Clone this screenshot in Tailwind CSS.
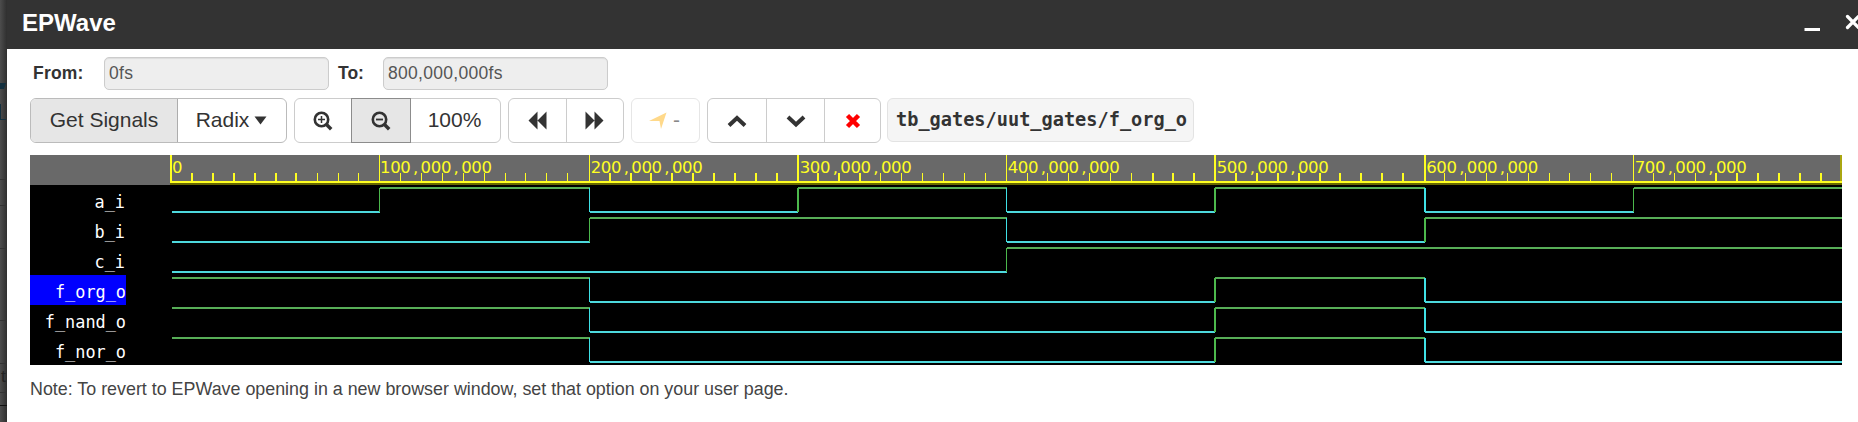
<!DOCTYPE html>
<html lang="en"><head><meta charset="utf-8"><title>EPWave</title>
<script src="https://cdn.jsdelivr.net/npm/@tailwindcss/browser@4"></script></head>
<body class="w-[1858px] h-[422px] overflow-hidden bg-white flex font-['Liberation_Sans',Arial,sans-serif] text-[17.5px] text-[#333]">
<aside class="w-[7px] shrink-0 h-full bg-gradient-to-r from-[#4d4d4d] to-[#2f2f2f] overflow-hidden">
<svg class="block" width="7" height="422"><path d="M0 83h6l-2 6h-4z" fill="#14303f"/><path d="M.5 104v16M0 119.500h6" stroke="#14303f" fill="none"/><path d="M0 179.500h7M0 205.500h7M0 248.500h7M0 320.500h7M0 363.500h7M0 392.500h7" stroke="#333"/><path d="M0 405.500h7" stroke="#111"/><text x="1" y="382" font-size="17" fill="#222">t</text></svg>
</aside>
<div class="flex-1 min-w-0 flex flex-col">
<header class="h-[49px] shrink-0 bg-[#333] text-white flex items-center justify-between pl-[15px] overflow-hidden">
<h1 class="text-[24px] leading-7 font-bold -mt-[3px]">EPWave</h1>
<svg width="60" height="49" class="shrink-0"><path d="M6.500 29.500h15.500" stroke="#fff" stroke-width="3"/><path d="M49.500 16.500l11 11m0-11l-11 11" stroke="#fff" stroke-width="3.200" stroke-linecap="round"/></svg>
</header>
<main class="pl-[23px]">
<div class="mt-2 h-[33px] flex items-center leading-[25px]">
<label class="w-[71px] ml-[3px] font-bold tracking-[0.2px]">From:</label>
<div class="w-[225px] h-[33px] border border-[#ccc] rounded-[5px] bg-[#eee] text-[#555] px-1 pt-[3px] tracking-[0.3px] shadow-[inset_0_1px_1px_rgba(0,0,0,0.075)]">0fs</div>
<label class="w-[46px] ml-[9px] -mr-px font-bold">To:</label>
<div class="w-[225px] h-[33px] border border-[#ccc] rounded-[5px] bg-[#eee] text-[#555] px-1 pt-[3px] tracking-[0.3px] shadow-[inset_0_1px_1px_rgba(0,0,0,0.075)]">800,000,000fs</div>
</div>
<div class="mt-2 h-[45px] flex gap-[7px] text-[21px] leading-[41px]">
<div class="w-[257px] flex border border-[#bbb] rounded-[6px] overflow-hidden">
<div class="w-[147px] bg-[#e6e6e6] border-r border-[#adadad] text-center">Get Signals</div>
<div class="flex-1 flex justify-center gap-[5px] pr-px">Radix<svg class="mt-[17px]" width="13" height="9"><path d="M.5.500h12l-6 8z" fill="#333"/></svg></div>
</div>
<div class="w-[207px] flex border border-[#ccc] rounded-[6px]">
<div class="w-[56px] flex items-center justify-center"><svg width="20" height="20" fill="none" stroke="#333"><circle cx="8.500" cy="8.500" r="6.700" stroke-width="2.600"/><path d="M13.500 13.500l4.700 4.700" stroke-width="3.500"/><path d="M5 8.500h7M8.500 5v7" stroke-width="1.500"/></svg></div>
<div class="w-[60px] -my-px bg-[#e6e6e6] border border-[#8c8c8c] flex items-center justify-center"><svg width="20" height="20" fill="none" stroke="#333"><circle cx="8.500" cy="8.500" r="6.700" stroke-width="2.600"/><path d="M13.500 13.500l4.700 4.700" stroke-width="3.500"/><path d="M5 8.500h7" stroke-width="1.800"/></svg></div>
<div class="flex-1 text-center pr-0.5">100%</div>
</div>
<div class="w-[116px] flex border border-[#ccc] rounded-[6px]">
<div class="w-[58px] border-r border-[#ccc] flex items-center justify-center"><svg width="19" height="19" fill="#333"><path d="M9.500.500v18L.5 9.500zM18.500.500v18l-9-9z"/></svg></div>
<div class="flex-1 flex items-center justify-center pr-0.5"><svg width="19" height="19" fill="#333"><path d="M.5.500v18l9-9zM9.500.500v18l9-9z"/></svg></div>
</div>
<div class="w-[69px] flex justify-center gap-[6px] border border-[#e6e6e6] rounded-[6px] text-[#888] pr-0.5"><svg class="mt-[13px]" width="18" height="18"><path d="M17.500.500L12 17l-1.500-8L0 9z" fill="#ffd98a"/></svg>-</div>
<div class="w-[174px] flex border border-[#ccc] rounded-[6px]">
<div class="w-[59px] border-r border-[#ccc] flex items-center justify-center"><svg width="20" height="14"><path d="M2 11.500l8-7.500L18 11.500" fill="none" stroke="#333" stroke-width="4"/></svg></div>
<div class="w-[58px] border-r border-[#ccc] flex items-center justify-center"><svg width="20" height="14"><path d="M2 3l8 7.500L18 3" fill="none" stroke="#333" stroke-width="4"/></svg></div>
<div class="flex-1 flex items-center justify-center"><svg width="16" height="16"><path d="M2.500 2.500l11 11M13.500 2.500l-11 11" stroke="#f00" stroke-width="4.500"/></svg></div>
</div>
<div class="w-[307px] h-[44px] -ml-px border border-[#e3e3e3] rounded-[6px] bg-[#f5f5f5] pl-2 text-[18.600px] leading-[41px] font-bold font-['DejaVu_Sans_Mono',monospace] whitespace-nowrap">tb_gates/uut_gates/f_org_o</div>
</div>
<svg id="wave" class="block mt-3" width="1812" height="210" shape-rendering="crispEdges" font-family="'DejaVu Sans Mono', monospace"></svg>
<p class="mt-3 leading-6 text-[17.860px] text-[#444]">Note: To revert to EPWave opening in a new browser window, set that option on your user page.</p>
</main>
</div>
<script>
const svg=document.getElementById('wave');
let out='<rect width="1812" height="210" fill="#000"/><rect width="1812" height="30" fill="#696969"/><rect y="120" width="96" height="30" fill="#00f"/>';
const rect=(x,y,w,h,c)=>{out+=`<rect x="${x}" y="${y}" width="${w}" height="${h}" fill="${c}"/>`};
const major=[140,349,559,767,976,1184,1394,1603,1810];
const wide=[1,0,0,1,0,1,1,0,1];
rect(140,28,1672,2,'#666600');
rect(140,26,1672,2,'#ff2');
for(let k=0;k<80;k++){
  const i=Math.floor(k/10),m=k%10;
  if(m===0)continue;
  const two=k<7||(k>20&&k<34)||(k>46&&k<60)||k>73;
  rect(two?Math.floor(140.700+k*20.880):Math.round(140.500+k*20.880),18,two?2:1,8,'#ff2');
}
major.forEach((x,i)=>{
  rect(x,0,wide[i]?2:1,i<8?28:26,i<8?'#ff2':'#aaa611');
  if(i===8)return;
  const s=i?i+'00,000,000':'0';
  const start=[142,350,560.700,769.700,977.700,1186.700,1396.200,1604.700][i];
  const xs=[...s].map((c,j)=>(start+j*10.150+(c===','?2.500:0)).toFixed(2)).join(' ');
  out+=`<text x="${xs}" y="18" font-family="'DejaVu Sans', sans-serif" font-size="16.500" fill="#ff2">${s}</text>`;
});
const rows=[['a_i','01010101'],['b_i','00110011'],['c_i','00001111'],['f_org_o','11000100'],['f_nand_o','11000100'],['f_nor_o','11000100']];
rows.forEach(([name,bits],r)=>{
  const y=30+r*30;
  out+=`<text x="${r<3?95:96}" y="${y+23}" text-anchor="end" font-size="16.870" fill="#fff">${name}</text>`;
  for(let i=0;i<8;i++){
    const b=+bits[i],x=i?major[i]+1:142,end=i<7?major[i+1]+1:1812;
    rect(x,y+(b?2:26),end-x,2,b?'#57ad57':'#4dd9dd');
    if(i&&bits[i]!==bits[i-1])rect(major[i],y+3,wide[i]?2:1,24,b?'#4cb84c':'#3fe0e6');
  }
});
svg.innerHTML=out;
</script>
</body></html>
